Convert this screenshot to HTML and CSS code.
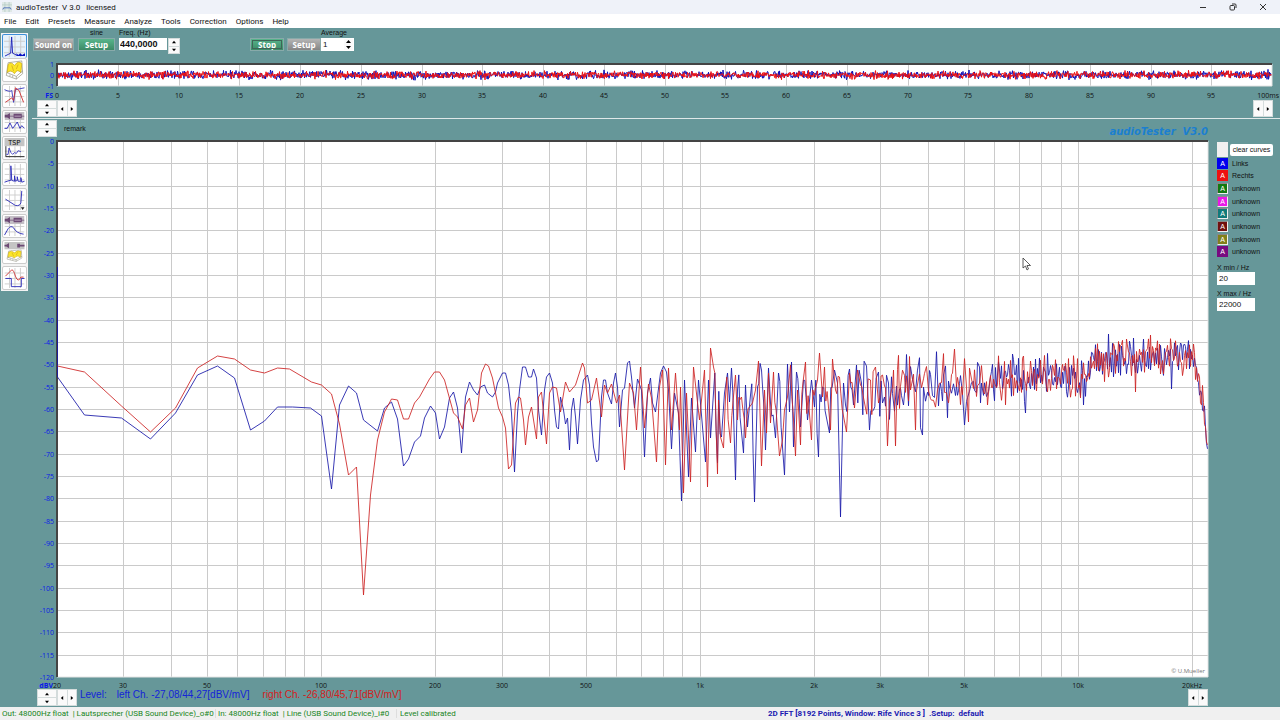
FILE: index.html
```html
<!DOCTYPE html>
<html lang="en">
<head>
    <meta charset="UTF-8">
    <title>audioTester V 3.0</title>
    <link rel="stylesheet" href="styles.css">
</head>
<body>
    <svg class="defs" width="0" height="0" aria-hidden="true">
        <symbol id="grid" viewBox="0 0 22 22">
            <path d="M0 5.5H22M0 11.5H22M0 17.5H22M5.5 0V22M11.5 0V22M17.5 0V22" stroke="#ccc" fill="none"/>
        </symbol>
        <symbol id="box3d" viewBox="0 0 22 22" preserveAspectRatio="none">
            <path d="M4 3L19 1L20 15L13 21L2 17Z" fill="#fff" stroke="#998" stroke-width=".8"/>
            <path d="M4 5Q7 1 11 6Q15 0 19 4L18 14Q14 9 11 15Q7 10 3 14Z" fill="#fbe528" stroke="#c8a818" stroke-width=".8"/>
            <path d="M3 14L13 18L20 12M13 18V21M6 16V18M9 17V19" stroke="#887" stroke-width=".7" fill="none"/>
            <path d="M8 6L10 12M15 5L13 10" stroke="#d8b020" fill="none"/>
        </symbol>
        <symbol id="speaker" viewBox="0 0 22 9">
            <path d="M0 0H22V9H0Z" fill="#c4bfc6"/>
            <path d="M0 3H3L6 1V8L3 6H0ZM6 4H10V5H6ZM10 2H19V7H10ZM19 4H22V5H19Z" fill="#6d4a75"/>
            <path d="M11 4H18V5H11Z" fill="#cbb8d0"/>
        </symbol>
        <symbol id="up" viewBox="0 0 5 5"><path d="M0 4L2.5 1L5 4Z"/></symbol>
        <symbol id="down" viewBox="0 0 5 5"><path d="M0 1L2.5 4L5 1Z"/></symbol>
        <symbol id="left" viewBox="0 0 5 5"><path d="M4 0L1 2.5L4 5Z"/></symbol>
        <symbol id="right" viewBox="0 0 5 5"><path d="M1 0L4 2.5L1 5Z"/></symbol>
    </svg>

    <header class="titlebar">
        <svg class="app-icon" viewBox="0 0 12 12">
            <path d="M0 0H12V12H0Z" fill="#dfe8e6"/>
            <path d="M0 3.5H12M3.5 0V12M8.5 0V12" stroke="#b6cdc6"/>
            <path d="M1 9L2 7H10L11 9" stroke="#3c62b4" fill="none"/>
        </svg>
        <span class="app-title">audioTester&nbsp; V 3.0 &nbsp; licensed</span>
        <button class="win-btn" aria-label="Minimize"><svg viewBox="0 0 8 8"><path d="M1 4.5H7"/></svg></button>
        <button class="win-btn" aria-label="Restore"><svg viewBox="0 0 8 8"><rect x="1" y="2.5" width="4.5" height="4.5" rx="1"/><path d="M3 1H6Q7 1 7 2V5"/></svg></button>
        <button class="win-btn" aria-label="Close"><svg viewBox="0 0 8 8"><path d="M1 1L7 7M7 1L1 7"/></svg></button>
    </header>

    <nav class="menubar">
        <button>File</button>
        <button>Edit</button>
        <button>Presets</button>
        <button>Measure</button>
        <button>Analyze</button>
        <button>Tools</button>
        <button>Correction</button>
        <button>Options</button>
        <button>Help</button>
    </nav>

    <main class="workspace">
        <div class="tools">
            <button class="tool active" aria-label="Spectrum"><svg viewBox="0 0 22 22"><use href="#grid"/><path d="M1 21L5 19L7 18L8 1L9 18L11 19L13 20" stroke="#1c22b8" fill="none"/><path d="M13 21V18L15 20L17 18L19 20L22 18V21Z" fill="#0a12c4"/></svg></button>
            <button class="tool" aria-label="3D spectrum"><svg viewBox="0 0 22 22"><use href="#box3d"/></svg></button>
            <button class="tool" aria-label="Transfer function"><svg viewBox="0 0 22 22"><use href="#grid"/><path d="M0 4Q6 7 8 5L10 18L12 4L22 2" stroke="#3a3ac0" fill="none"/><path d="M1 18L8 13L10 16L12 2L16 5L21 18" stroke="#d03030" fill="none"/></svg></button>
            <button class="tool" aria-label="Impedance"><svg viewBox="0 0 22 22"><use href="#grid"/><use href="#speaker" width="22" height="9"/><path d="M0 18L3 18L6 12L9 18L12 14L14 11L17 18L19 15L22 18" stroke="#2a2ab8" fill="none"/></svg></button>
            <button class="tool" aria-label="Thiele Small parameters"><svg viewBox="0 0 22 22"><path d="M0 0H22V9H0Z" fill="#c4c4c4"/><use href="#grid" y="9" height="22"/><path d="M1.5 9V20.5H22" stroke="#222" fill="none"/><path d="M2 18L4 18L5 11L7 16L9 18L11 16L13 17L15 14L18 15" stroke="#3a3ac0" fill="none"/><text x="11" y="8" class="tsp">TSP</text></svg></button>
            <button class="tool" aria-label="Distortion"><svg viewBox="0 0 22 22"><use href="#grid"/><path d="M0 20L3 19L6 18L7 18V2L8 18L11 19V13L12 19L14 18V14L15 19L18 19V15L19 20L22 19" stroke="#2a2ab8" fill="none"/></svg></button>
            <button class="tool" aria-label="THD over level"><svg viewBox="0 0 22 22"><use href="#grid"/><path d="M1 10L12 17Q17 18 18 14L19 1" stroke="#2a2ab8" fill="none"/><path d="M18 19L20 22L22 19Z" fill="#222"/></svg></button>
            <button class="tool" aria-label="Frequency response"><svg viewBox="0 0 22 22"><use href="#grid"/><use href="#speaker" width="22" height="9"/><path d="M0 21L4 14Q7 10 10 13Q13 19 21 20" stroke="#2a2ab8" fill="none"/></svg></button>
            <button class="tool" aria-label="Waterfall"><svg viewBox="0 0 22 22"><path d="M0 0H22V8H0Z" fill="#c4c4c4"/><path d="M0 3H2L5 1V7L2 5H0ZM14 2H17V6H14ZM17 3H22V5H17Z" fill="#6d4a75"/><use href="#box3d" x="1" y="8" width="20" height="14"/></svg></button>
            <button class="tool" aria-label="Oscilloscope"><svg viewBox="0 0 22 22"><use href="#grid"/><path d="M1 9Q5 5 8 2Q10 2 12 9Q15 17 18 10L21 10" stroke="#d03030" fill="none"/><path d="M1 11.5H7.5V20.5H18.5V11.5H22" stroke="#2a2ab8" fill="none"/></svg></button>
        </div>

        <div class="content">
            <div class="controls">
                <button class="push grey">Sound on</button>
                <div class="field centered">
                    <span>sine</span>
                    <button class="push green">Setup</button>
                </div>
                <div class="field">
                    <label for="freq">Freq. (Hz)</label>
                    <input id="freq" class="freq" type="text" value="440,0000">
                </div>
                <div class="updown narrow">
                    <button aria-label="Frequency up"><svg><use href="#up"/></svg></button>
                    <button aria-label="Frequency down"><svg><use href="#down"/></svg></button>
                </div>
                <button class="push green stop">Stop</button>
                <button class="push grey setup">Setup</button>
                <div class="field average">
                    <label for="avg">Average</label>
                    <div class="avg-box">
                        <input id="avg" type="text" value="1">
                        <div class="updown inner">
                            <button aria-label="Average up"><svg><use href="#up"/></svg></button>
                            <button aria-label="Average down"><svg><use href="#down"/></svg></button>
                        </div>
                    </div>
                </div>
            </div>

            <svg id="wave" class="wave"></svg>

            <div class="scroll-row">
                <div class="updown">
                    <button aria-label="Zoom in"><svg><use href="#up"/></svg></button>
                    <button aria-label="Zoom out"><svg><use href="#down"/></svg></button>
                </div>
                <div class="leftright">
                    <button aria-label="Shorter"><svg><use href="#left"/></svg></button>
                    <button aria-label="Longer"><svg><use href="#right"/></svg></button>
                </div>
                <div class="leftright end">
                    <button aria-label="Scroll left"><svg><use href="#left"/></svg></button>
                    <button aria-label="Scroll right"><svg><use href="#right"/></svg></button>
                </div>
            </div>

            <div class="analyzer">
                <section class="plot">
                    <div class="plot-head">
                        <div class="updown">
                            <button aria-label="Range up"><svg><use href="#up"/></svg></button>
                            <button aria-label="Range down"><svg><use href="#down"/></svg></button>
                        </div>
                        <span>remark</span>
                        <em class="brand">audioTester&nbsp; V3.0</em>
                    </div>
                    <div class="plot-area">
                        <svg id="spectrum" class="spectrum"></svg>
                    </div>
                    <div class="plot-foot">
                        <div class="updown">
                            <button aria-label="Level up"><svg><use href="#up"/></svg></button>
                            <button aria-label="Level down"><svg><use href="#down"/></svg></button>
                        </div>
                        <div class="leftright">
                            <button aria-label="Start lower"><svg><use href="#left"/></svg></button>
                            <button aria-label="Start higher"><svg><use href="#right"/></svg></button>
                        </div>
                        <span class="level blue">Level:</span>
                        <span class="level blue left-ch">left Ch. -27,08/44,27[dBV/mV]</span>
                        <span class="level red">right Ch. -26,80/45,71[dBV/mV]</span>
                        <div class="leftright end">
                            <button aria-label="Stop lower"><svg><use href="#left"/></svg></button>
                            <button aria-label="Stop higher"><svg><use href="#right"/></svg></button>
                        </div>
                    </div>
                </section>

                <aside class="side">
                    <div class="clear-row">
                        <span class="blank"></span>
                        <button class="clear">clear curves</button>
                    </div>
                    <ul class="curves">
                        <li><button class="chip c-blue">A</button>Links</li>
                        <li><button class="chip c-red">A</button>Rechts</li>
                        <li><button class="chip off c-green">A</button>unknown</li>
                        <li><button class="chip off c-pink">A</button>unknown</li>
                        <li><button class="chip off c-teal">A</button>unknown</li>
                        <li><button class="chip off c-maroon">A</button>unknown</li>
                        <li><button class="chip off c-olive">A</button>unknown</li>
                        <li><button class="chip c-purple">A</button>unknown</li>
                    </ul>
                    <label for="xmin">X min / Hz</label>
                    <input id="xmin" type="text" value="20">
                    <label for="xmax">X max / Hz</label>
                    <input id="xmax" type="text" value="22000">
                </aside>
            </div>
        </div>
    </main>

    <footer class="statusbar">
        <span class="out">Out: 48000Hz float&nbsp; | Lautsprecher (USB Sound Device)_o#0</span>
        <span class="in">In: 48000Hz float&nbsp; | Line (USB Sound Device)_i#0</span>
        <span class="cal">Level calibrated</span>
        <strong>2D FFT [8192 Points, Window: Rife Vince 3 ]&nbsp; .Setup:&nbsp; default</strong>
    </footer>

    <svg class="pointer" viewBox="0 0 9 14"><path d="M1 1V11L3.500 9L5 13L6.500 12L5 8.500H8.500Z" fill="#fff" stroke="#333" stroke-width=".8"/></svg>

    <script src="charts.js"></script>
</body>
</html>
```
FILE: styles.css
```css
* {
    box-sizing: border-box;
}

body {
    margin: 0;
    height: 100vh;
    display: flex;
    flex-direction: column;
    overflow: hidden;
    background-color: #669799;
    font-family: "Liberation Sans", Arial, sans-serif;
    font-size: 7px;
    line-height: 9px;
    color: #111;
}

button {
    font: inherit;
    color: inherit;
    padding: 0;
    border: none;
    background: none;
}

input {
    font: inherit;
    color: inherit;
    padding: 0 2px;
    border: none;
    background-color: #fff;
    min-width: 0;
}

.defs {
    position: absolute;
}

/* window frame */
.titlebar {
    display: flex;
    align-items: center;
    height: 14px;
    flex: none;
    padding: 0 2px;
    background-color: #eff2f9;
    font-family: Roboto, "Open Sans", sans-serif;
    font-size: 8px;
}

.app-icon {
    width: 10px;
    height: 10px;
    margin-right: 4px;
}

.app-title {
    flex: 1;
}

.win-btn {
    width: 30px;
    height: 14px;
    display: flex;
    align-items: center;
    justify-content: center;
}

.win-btn svg {
    width: 8px;
    height: 8px;
    fill: none;
    stroke: #333;
}

.menubar {
    display: flex;
    flex: none;
    gap: 9px;
    height: 14px;
    padding-left: 4px;
    background-color: #fff;
    font-family: Roboto, "Open Sans", sans-serif;
    font-size: 8px;
}

.workspace {
    display: flex;
    flex: 1;
    min-height: 0;
}

/* tool column */
.tools {
    display: flex;
    flex-direction: column;
    align-self: flex-start;
    gap: 2px;
    width: 27px;
    margin: 5px 4px 0 1px;
    padding: 1px;
    background-color: #f4f4f4;
}

.tool {
    height: 24px;
    padding: 1px;
    border: 1px solid #ccc;
    border-radius: 2px;
    background-color: #fff;
}

.tool.active {
    margin-bottom: -2px;
    border-color: #3d8fd8;
    border-bottom: none;
    background-color: #e6f2fc;
}

.tool svg {
    display: block;
    width: 100%;
    height: 100%;
}

.tsp {
    font-family: "Open Sans", sans-serif;
    font-size: 8px;
    text-anchor: middle;
}

.content {
    flex: 1;
    min-width: 0;
    display: flex;
    flex-direction: column;
}

/* generator and analyzer controls */
.controls {
    display: flex;
    align-items: flex-start;
    gap: 4px;
    height: 30px;
    padding-left: 1px;
}

.push {
    width: 37px;
    height: 13px;
    color: #fff;
    font-family: "Open Sans", "Noto Sans", sans-serif;
    font-size: 8px;
    font-weight: bold;
    line-height: 11px;
    border: 1px solid #8aa;
}

.controls > .push {
    margin-top: 10px;
}

.push.grey {
    width: 41px;
    background: linear-gradient(#b5b5b5, #858585);
}

.push.green {
    background: linear-gradient(#58b58c, #3c8a66);
}

.push.stop {
    width: 34px;
    margin-left: 66px;
    outline: 1px solid #3f6557;
    outline-offset: -3px;
}

.push.grey.setup {
    width: 34px;
    margin: 10px -4px 0 -1px;
}

.field {
    display: flex;
    flex-direction: column;
}

.field > span,
.field > label {
    height: 10px;
}

.centered {
    text-align: center;
}

.freq {
    width: 48px;
    height: 12px;
    padding: 0 1px;
    font-size: 9px;
    font-weight: bold;
}

.avg-box {
    display: flex;
    width: 33px;
    height: 13px;
    background-color: #fff;
}

.avg-box input {
    width: 22px;
    font-size: 8px;
}

/* small arrow buttons */
.updown,
.leftright {
    display: flex;
    flex: none;
    gap: 1px;
    width: 20px;
    height: 17px;
    padding: 1px;
    background-color: #d4dcdc;
}

.updown {
    flex-direction: column;
}

.updown button,
.leftright button {
    flex: 1;
    display: flex;
    align-items: center;
    justify-content: center;
    background-color: #fafafa;
}

.updown svg,
.leftright svg {
    width: 4px;
    height: 4px;
}

.updown.narrow {
    width: 12px;
    height: 16px;
    margin: 10px 0 0 -3px;
}

.updown.inner {
    width: 11px;
    height: 13px;
    gap: 0;
    background-color: #fff;
}

.updown.inner svg {
    width: 5px;
    height: 5px;
}

.end {
    margin-left: auto;
}

.wave {
    display: block;
    width: 100%;
    height: 42px;
    flex: none;
}

.scroll-row {
    display: flex;
    height: 19px;
    flex: none;
    padding: 0 7px 0 5px;
    border-bottom: 1px solid #dfe8e8;
}

/* spectrum */
.analyzer {
    display: flex;
    flex: 1;
    min-height: 0;
}

.plot {
    flex: 1;
    min-width: 0;
    display: flex;
    flex-direction: column;
}

.plot-head {
    display: flex;
    align-items: center;
    height: 18px;
    flex: none;
    padding: 0 4px 0 5px;
}

.plot-head span {
    margin-left: 7px;
}

.brand {
    margin: 6px 0 0 auto;
    color: #1b7fd0;
    font-family: "DejaVu Sans", sans-serif;
    font-size: 10px;
    font-weight: bold;
}

.plot-area {
    flex: 1;
    min-height: 0;
}

.spectrum {
    display: block;
    width: 100%;
    height: 100%;
}

.plot-foot {
    display: flex;
    height: 18px;
    flex: none;
    padding: 0 4px 0 5px;
}

.level {
    margin-left: 3px;
    font-size: 10px;
    line-height: 12px;
}

.left-ch {
    margin: 0 10px;
}

.blue {
    color: #1424d8;
}

.red {
    color: #d42020;
}

/* svg parts */
.grid-line {
    stroke: #cacaca;
    shape-rendering: crispEdges;
}

.curve {
    fill: none;
    stroke-width: 1;
    stroke-linejoin: bevel;
}

.curve-left {
    stroke: #1818a8;
}

.curve-right {
    stroke: #cc2222;
}

.spectrum .curve {
    stroke-opacity: 0.85;
}

.wave .curve-left {
    stroke: #1010b8;
}

.wave .curve-right {
    stroke: #ee1111;
}

.frame {
    fill: none;
    stroke: #e4e4e4;
}

.frame-dark {
    fill: none;
    stroke: #444;
    stroke-width: 2;
}

.axis {
    font-family: "Open Sans", "Noto Sans", sans-serif;
    font-size: 7px;
    text-anchor: middle;
    fill: #111;
}

.axis-y {
    text-anchor: end;
    fill: #0a18e8;
}

.axis-last {
    text-anchor: end;
}

.unit {
    font-weight: bold;
}

.credit {
    font-family: "Open Sans", "Noto Sans", sans-serif;
    font-size: 6px;
    text-anchor: end;
    fill: #777;
}

/* right panel */
.side {
    width: 68px;
    display: flex;
    flex-direction: column;
    align-items: flex-start;
    padding: 23px 0 0 5px;
}

.clear-row {
    display: flex;
    align-items: center;
    gap: 2px;
}

.blank {
    width: 11px;
    height: 15px;
    background-color: #f0f0f0;
}

.clear {
    width: 43px;
    height: 12px;
    border-radius: 2px;
    background-color: #fff;
    white-space: nowrap;
}

.curves {
    display: grid;
    grid-auto-rows: 1fr;
    height: 101px;
    margin: 0 0 5px;
    padding: 0;
    list-style: none;
}

.curves li {
    display: flex;
    align-items: center;
    gap: 4px;
}

.chip {
    width: 11px;
    height: 11px;
    color: #fff;
    line-height: 9px;
}

.chip.off {
    border: 1px solid #eee;
    border-left-color: #888;
    border-top-color: #888;
}

.c-blue { background-color: #0000ee; }
.c-red { background-color: #ee1010; }
.c-green { background-color: #107a10; }
.c-pink { background-color: #e818e8; }
.c-teal { background-color: #107a7a; }
.c-maroon { background-color: #701010; }
.c-olive { background-color: #80801a; }
.c-purple { background-color: #780a80; }

.side input {
    width: 38px;
    height: 13px;
    margin-bottom: 4px;
    font-size: 8px;
}

/* status bar */
.statusbar {
    display: flex;
    align-items: center;
    flex: none;
    height: 13px;
    padding-left: 2px;
    background-color: #f0f0f0;
    color: #17851c;
    font-family: Roboto, "Open Sans", sans-serif;
    font-size: 8px;
    white-space: nowrap;
}

.out,
.in {
    border-right: 1px solid #ddd;
}

.out {
    width: 214px;
}

.in {
    width: 181px;
    padding-left: 2px;
}

.cal {
    padding-left: 3px;
}

.statusbar strong {
    flex: 1;
    padding-left: 16px;
    text-align: center;
    color: #1a1ab0;
}

.pointer {
    position: absolute;
    left: 1022px;
    top: 257px;
    width: 9px;
    height: 14px;
}
```
FILE: charts.js
```js
const NS = 'http://www.w3.org/2000/svg';

// recorded curves, in units of the 1151 x 536 plot starting at 57,141
const BASE = { x: 57, y: 141, w: 1151, h: 536 };

const leftCurve = [57,267,57,377,84,415,121,418,150,439,175,413,197,375,217,366,234,378,250,430,264,421,277,407,292,407,310,408,321,416,331,489,339,405,348,386,356,393,363,420,377,431,384,408,391,402,397,419,403,466,408,459,414,442,420,436,424,418,430,406,435,413,439,439,444,427,449,398,453,392,457,408,461,453,465,397,469,382,473,390,477,395,480,387,484,385,487,393,492,397,495,392,497,383,502,373,505,373,508,385,511,413,514,472,517,413,519,390,522,367,525,367,528,377,531,377,533,369,536,378,538,410,541,435,544,390,546,377,549,373,552,383,554,410,556,427,558,429,560,397,563,410,565,424,567,418,569,450,571,410,573,398,575,417,577,444,580,400,583,380,587,375,589,385,591,423,593,447,596,462,598,460,601,397,603,380,605,380,607,393,611,404,613,383,615,373,617,387,619,427,622,390,624,388,627,363,629,361,631,377,634,408,637,379,641,390,644,457,647,393,650,378,652,403,655,412,660,373,663,366,666,372,668,390,671,449,674,393,678,413,681,501,684,380,688,477,691,398,695,452,698,380,705,462,708,380,710,438,713,393,717,463,721,437,724,393,727,373,729,402,731,368,735,480,737,390,743,453,745,385,747,427,750,395,754,502,757,387,761,370,765,450,768,368,770,403,775,438,778,373,784,475,787,364,789,412,791,362,793,447,796,372,800,427,803,380,807,420,811,380,814,407,818,457,822,387,829,433,834,370,837,383,840,517,843,383,845,405,849,369,853,405,856,365,861,383,866,366,869,430,873,410,878,372,882,403];

const rightCurve = [57,366,84,372,121,406,150,432,175,408,197,368,217,356,234,359,250,370,264,373,277,368,289,369,311,382,321,385,331,394,339,424,348,475,356,467,363,595,370,495,377,440,384,412,391,399,397,400,403,419,408,419,414,403,419,397,429,379,434,372,439,372,444,380,453,413,457,417,462,429,465,405,469,398,473,422,477,410,481,373,485,364,488,366,492,378,495,393,498,408,502,417,505,428,508,469,511,465,515,403,518,397,520,398,523,420,525,445,528,417,531,407,536,439,538,397,541,392,546,444,549,393,552,387,556,388,560,412,565,382,569,392,575,385,582,363,584,368,587,403,591,400,596,378,601,417,604,385,607,393,611,384,616,403,619,395,624,470,629,383,633,393,636,430,640,367,644,428,648,384,651,398,656,462,659,387,662,370,665,465,668,368,671,430,675,373,679,430,680,387,683,493,686,393,690,482,693,367,699,420,704,370,707,487,710,348,713,367,717,474,718,400,720,437,723,448,725,397,730,443,735,375,737,420,741,397,745,438,752,403,755,390,758,361,761,466,764,390,766,433,768,373,770,423,773,372,779,456,782,440,784,410,787,397,790,365,795,456,797,390,800,445,805,362,811,440,817,380,819,353,822,397,824,367,830,430,832,359,835,390,839,377,846,432,849,373,854,408,857,370,860,385,865,408,870,380,875,367,878,403,882,375];

// x, centre, spread of the dense part above 3 kHz
const noiseBand = [
    [882, 390, 42], [920, 390, 42], [960, 386, 38], [1000, 380, 28], [1040, 377, 26],
    [1080, 377, 25], [1088, 374, 24], [1092, 361, 24], [1140, 358, 23], [1170, 356, 23],
    [1192, 357, 20], [1198, 378, 20], [1203, 408, 18], [1208, 458, 4]
];
const leftSpikes = { 922: 435, 964: 425, 1012: 354, 1025: 413, 1083: 405, 1108: 334, 1133: 338, 1171: 389 };
const rightSpikes = { 887: 446, 895: 446, 915: 430, 954: 349, 968: 422, 1023: 356, 1135: 392, 1150: 335 };

function random(seed) {
    let s = seed;
    return () => {
        s = (s * 16807) % 2147483647;
        return s / 2147483647;
    };
}

function band(x) {
    let i = 1;
    while (i < noiseBand.length - 1 && noiseBand[i][0] < x) i++;
    const [a, b] = [noiseBand[i - 1], noiseBand[i]];
    const t = (x - a[0]) / (b[0] - a[0]);
    return [a[1] + (b[1] - a[1]) * t, a[2] + (b[2] - a[2]) * t];
}

function withNoise(curve, spikes, seed) {
    const points = [];
    const rnd = random(seed);
    for (let i = 0; i < curve.length; i += 2) {
        const x = curve[i], y = curve[i + 1];
        const px = curve[i - 2], py = curve[i - 1];
        // wide gaps at the upper end get the fine ripple back
        if (x > 715 && x - px >= 4) {
            points.push(px + 1.3, 395 + (rnd() - 0.5) * 45);
            points.push(px + 2.6, py + (y - py) * 0.6 - rnd() * 14);
        }
        points.push(x, y);
    }
    let step = 2;
    for (let x = 884; x <= 1207; x += step) {
        const [centre, spread] = band(x);
        const spike = spikes[x] || (step === 2 && spikes[x - 1]);
        const y = spike || centre + (rnd() + rnd() - 1) * spread;
        points.push(x, y);
        step = x < 1000 && rnd() < 0.5 ? 2 : 1;
    }
    return points;
}

function add(svg, name, attrs, text) {
    const el = document.createElementNS(NS, name);
    for (const key in attrs) el.setAttribute(key, attrs[key]);
    if (text !== undefined) el.textContent = text;
    svg.appendChild(el);
}

function line(svg, x1, y1, x2, y2) {
    add(svg, 'path', { d: `M${x1} ${y1}L${x2} ${y2}`, class: 'grid-line' });
}

function frame(svg, x, y, w, h) {
    add(svg, 'path', { d: `M${x + w} ${y}V${y + h}H${x}`, class: 'frame' });
    add(svg, 'path', { d: `M${x} ${y + h}V${y}H${x + w}`, class: 'frame-dark' });
}

function drawWave() {
    const svg = document.getElementById('wave');
    svg.replaceChildren();
    const x0 = 25, y0 = 6, h = 22;
    const w = svg.clientWidth - x0 - 8;
    const mid = y0 + h / 2;
    add(svg, 'rect', { x: x0, y: y0, width: w, height: h, fill: '#fff' });
    for (let ms = 0; ms <= 100; ms += 5) {
        const x = Math.round(x0 + w * ms / 100);
        if (ms > 0 && ms < 100) line(svg, x, y0, x, y0 + h);
        if (ms < 100) add(svg, 'text', { x: x, y: y0 + 34, class: 'axis' }, ms);
    }
    add(svg, 'text', { x: svg.clientWidth - 1, y: y0 + 34, class: 'axis axis-last' }, '100ms');
    ['left', 'right'].forEach((side, n) => {
        const rnd = random(n ? 4711 : 99);
        let d = '';
        for (let x = 0; x < w; x += 0.5) {
            const y = mid + (rnd() + rnd() + rnd() - 1.5) * (n ? 3.6 : 4);
            d += (d ? 'L' : 'M') + (x0 + x).toFixed(1) + ' ' + y.toFixed(1);
        }
        add(svg, 'path', { d: d, class: 'curve curve-' + side });
    });
    frame(svg, x0, y0, w, h);
    [1, 0, -1].forEach((v, i) => {
        add(svg, 'text', { x: x0 - 3, y: y0 + 3 + i * 11, class: 'axis axis-y' }, v);
    });
    add(svg, 'text', { x: x0 - 4, y: y0 + 34, class: 'axis axis-y unit' }, 'FS');
}

function drawSpectrum() {
    const svg = document.getElementById('spectrum');
    svg.replaceChildren();
    const x0 = 25, y0 = 4;
    const w = svg.clientWidth - x0 - 4;
    const h = svg.clientHeight - y0 - 12;
    const fx = f => Math.round(x0 - 0.3 + w * Math.log10(f / 20) / Math.log10(22000 / 20));

    add(svg, 'rect', { x: x0, y: y0, width: w, height: h, fill: '#fff' });
    for (let db = 0; db <= 120; db += 5) {
        const y = Math.round(y0 + h * db / 120);
        if (db > 0 && db < 120) line(svg, x0, y, x0 + w, y);
        add(svg, 'text', { x: x0 - 3, y: y + 3, class: 'axis axis-y' }, db ? -db : 0);
    }
    for (let decade = 10; decade <= 10000; decade *= 10) {
        for (let k = 1; k < 10; k++) {
            const f = decade * k;
            if (f > 20 && f <= 20000) line(svg, fx(f), y0, fx(f), y0 + h);
        }
    }
    const labels = { 20: '20', 30: '30', 50: '50', 100: '100', 200: '200', 300: '300', 500: '500',
        1000: '1k', 2000: '2k', 3000: '3k', 5000: '5k', 10000: '10k', 20000: '20kHz' };
    for (const f in labels) {
        add(svg, 'text', { x: fx(f), y: y0 + h + 11, class: 'axis' }, labels[f]);
    }
    add(svg, 'text', { x: x0 - 4, y: y0 + h + 11, class: 'axis axis-y unit' }, 'dBV');
    frame(svg, x0, y0, w, h);

    const curves = {
        left: withNoise(leftCurve, leftSpikes, 1234),
        right: withNoise(rightCurve, rightSpikes, 777)
    };
    for (const side in curves) {
        const p = curves[side];
        let d = '';
        for (let i = 0; i < p.length; i += 2) {
            const x = x0 + (p[i] - BASE.x) * w / BASE.w;
            const y = y0 + (p[i + 1] - BASE.y) * h / BASE.h;
            d += (d ? 'L' : 'M') + (x + 0.5).toFixed(1) + ' ' + y.toFixed(1);
        }
        add(svg, 'path', { d: d, class: 'curve curve-' + side });
    }
    add(svg, 'text', { x: x0 + w - 3, y: y0 + h - 4, class: 'credit' }, '© U.Mueller');
}

function draw() {
    drawWave();
    drawSpectrum();
}

window.addEventListener('resize', draw);
draw();
```
